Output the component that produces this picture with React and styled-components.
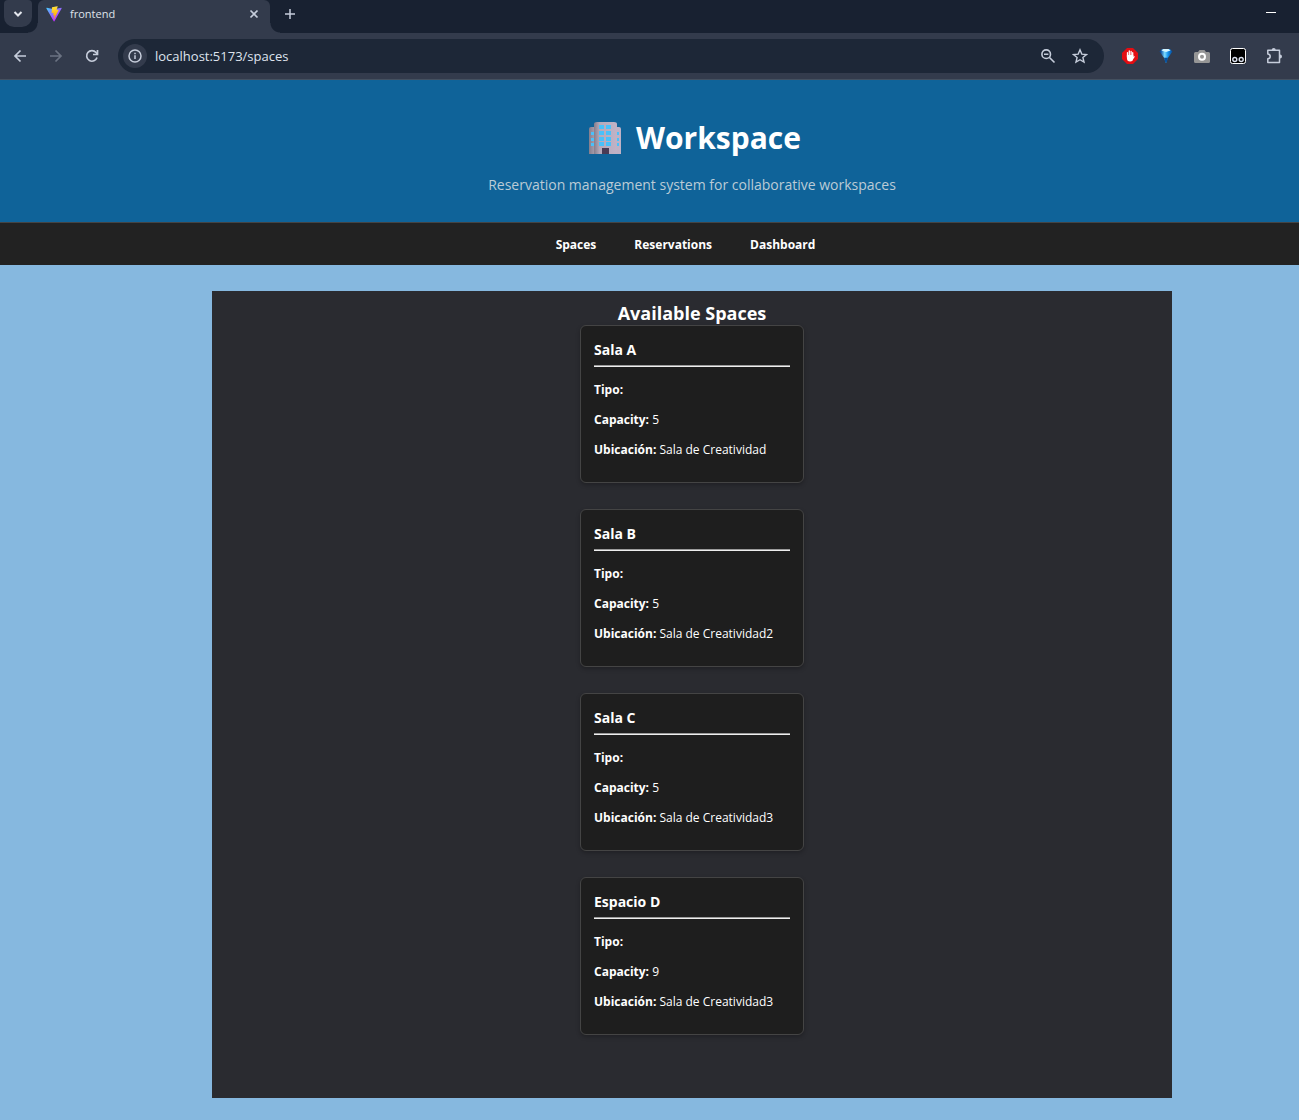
import React from "react";
import styled, { createGlobalStyle } from "styled-components";

const GlobalStyle = createGlobalStyle`
  *, *::before, *::after { box-sizing: border-box; }
  body {
    margin: 0;
    background: #86b8df;
    color: #fff;
    font-family: "Open Sans", "Noto Sans", sans-serif;
    font-size: 13px;
  }
  h1, h2, h3, p { margin: 0; }
`;

const Page = styled.div`
  display: flex;
  flex-direction: column;
  min-height: 100vh;
`;

const TabStrip = styled.div`
  display: flex;
  align-items: flex-start;
  height: 33px;
  background: #182131;
  color: #dfe3ea;
`;

const TabSearch = styled.button`
  display: grid;
  place-items: center;
  width: 28px;
  height: 27px;
  margin: 0 6px 0 4px;
  padding: 0;
  border: 0;
  border-radius: 4px 4px 10px 10px;
  background: #333b4c;
  color: #e4e7ee;
`;

const Tab = styled.div`
  position: relative;
  display: flex;
  align-items: center;
  width: 232px;
  height: 33px;
  padding: 0 8px 6px;
  border-radius: 6px 6px 0 0;
  background: #333b4c;
  font-size: 11px;

  &::before, &::after {
    content: "";
    position: absolute;
    bottom: 0;
    width: 10px;
    height: 10px;
  }
  &::before {
    right: 100%;
    background: radial-gradient(circle at 0 0, transparent 9px, #333b4c 10px);
  }
  &::after {
    left: 100%;
    background: radial-gradient(circle at 100% 0, transparent 9px, #333b4c 10px);
  }
`;

const TabTitle = styled.span`
  flex: 1;
  margin-left: 8px;
`;

const IconButton = styled.button`
  display: grid;
  place-items: center;
  flex: none;
  width: ${(p) => p.$size || 36}px;
  height: ${(p) => p.$size || 36}px;
  padding: 0;
  border: 0;
  border-radius: 50%;
  background: ${(p) => p.$fill || "transparent"};
  color: ${(p) => p.$color || "#c6cddb"};
`;

const NewTab = styled(IconButton)`
  height: 27px;
  margin-left: 2px;
`;

const Minimize = styled(IconButton)`
  height: 26px;
  margin: 0 10px 0 auto;
  color: #fff;
`;

const Toolbar = styled.div`
  display: flex;
  align-items: center;
  height: 47px;
  padding: 0 7px 0 2px;
  border-bottom: 1px solid #44505f;
  background: #333b4c;
`;

const AddressBar = styled.div`
  display: flex;
  align-items: center;
  flex: 1;
  height: 34px;
  margin: 0 8px;
  padding: 0 8px 0 5px;
  border-radius: 17px;
  background: #1d2737;
`;

const Address = styled.input`
  flex: 1;
  min-width: 0;
  margin-left: 8px;
  padding: 0;
  border: 0;
  outline: 0;
  background: transparent;
  color: #dfe4ee;
  font: 13px "Open Sans", sans-serif;
`;

const Header = styled.header`
  display: flex;
  flex-direction: column;
  align-items: center;
  height: 143px;
  padding: 36px 0 0 85px;
  border-bottom: 1px solid #444;
  background: #0f6399;
`;

const Title = styled.h1`
  display: flex;
  align-items: center;
  gap: 14px;
  font-size: 30px;
  line-height: 44px;
  font-weight: 700;
`;

const Subtitle = styled.p`
  margin-top: 15px;
  color: #bbcbd6;
  font-size: 14px;
  line-height: 20px;
`;

const Nav = styled.nav`
  display: flex;
  justify-content: center;
  gap: 38px;
  padding: 13px 13px 11px 85px;
  background: #222;
`;

const NavLink = styled.a`
  color: #fff;
  font-size: 12px;
  font-weight: 700;
  line-height: 18px;
  text-decoration: none;
`;

const Content = styled.div`
  padding: 26px 0 22px 85px;
`;

const Main = styled.main`
  display: flex;
  flex-direction: column;
  align-items: center;
  max-width: 960px;
  margin: 0 auto;
  padding: 10px 13px 63px;
  background: #2a2b30;
`;

const SectionTitle = styled.h2`
  font-size: 18px;
  line-height: 24px;
  font-weight: 700;
`;

const CardList = styled.div`
  display: grid;
  gap: 26px;
`;

const Card = styled.article`
  width: 224px;
  padding: 13px 13px 24px;
  border: 1px solid #444;
  border-radius: 6px;
  background: #1e1e1e;
  box-shadow: 0 2px 4px rgba(0, 0, 0, 0.25);
`;

const CardTitle = styled.h3`
  font-size: 14px;
  line-height: 22px;
  font-weight: 700;
`;

const Rule = styled.hr`
  height: 2px;
  margin: 4px 0 14px;
  border: 0;
  border-top: 1px solid #9a9a9a;
  background: #eee;
`;

const Field = styled.p`
  font-size: 12px;
  line-height: 17px;
  & + & { margin-top: 13px; }
`;

const Stroke = ({ size = 16, width = 2, children }) => (
  <svg width={size} height={size} viewBox={`0 0 ${size} ${size}`} fill="none"
    stroke="currentColor" strokeWidth={width} aria-hidden="true">{children}</svg>
);

const ViteLogo = () => (
  <svg width="16" height="16" viewBox="0 0 410 404" aria-hidden="true">
    <defs>
      <linearGradient id="va" x1="6" y1="33" x2="235" y2="344" gradientUnits="userSpaceOnUse">
        <stop stopColor="#41D1FF" /><stop offset="1" stopColor="#BD34FE" />
      </linearGradient>
      <linearGradient id="vb" x1="194" y1="9" x2="236" y2="293" gradientUnits="userSpaceOnUse">
        <stop stopColor="#FFEA83" /><stop offset=".08" stopColor="#FFDD35" /><stop offset="1" stopColor="#FFA800" />
      </linearGradient>
    </defs>
    <path fill="url(#va)" d="M399.641 59.525 215.643 388.545c-3.799 6.793-13.559 6.833-17.415.073L10.582 59.556C6.38 52.19 12.68 43.266 21.028 44.76l184.195 32.923c1.175.21 2.378.208 3.553-.006l180.343-32.87c8.32-1.517 14.649 7.337 10.522 14.719Z" />
    <path fill="url(#vb)" d="M292.965 1.574 156.801 28.255a5 5 0 0 0-4.03 4.611l-8.376 141.464c-.197 3.332 2.863 5.918 6.115 5.168l37.91-8.749c3.547-.818 6.752 2.306 6.023 5.873l-11.263 55.153c-.758 3.712 2.727 6.886 6.352 5.785l23.415-7.114c3.63-1.102 7.118 2.081 6.35 5.796l-17.899 86.633c-1.12 5.419 6.088 8.374 9.094 3.728l2.008-3.103 110.954-221.428c1.858-3.707-1.346-7.935-5.418-7.15l-39.022 7.532c-3.667.707-6.787-2.708-5.752-6.296l25.469-88.291c1.036-3.594-2.095-7.012-5.766-6.293Z" />
  </svg>
);

const Building = () => (
  <svg width="39" height="34" viewBox="-5 0 39 34" aria-hidden="true">
    <defs>
      <linearGradient id="tower"><stop stopColor="#857e8c" /><stop offset=".25" stopColor="#b5aabb" /><stop offset="1" stopColor="#c0b2c6" /></linearGradient>
    </defs>
    <path d="M1 8q0-2 2-2h28q2 0 2 2v25H1Z" fill="url(#tower)" />
    <path d="M6 3q0-2 3-2h17q3 0 3 2v30H6Z" fill="url(#tower)" />
    <g fill="#49c1fa">
      {[4, 10, 16, 21].map((y) => <path key={y} d={`M11 ${y}h5v4h-5zM18 ${y}h5v4h-5z`} />)}
      {[11, 17, 22].map((y) => <path key={y} d={`M3 ${y}h3v3H3zM29 ${y}h2v3h-2z`} />)}
    </g>
    <path d="M14 27h7v6h-7z" fill="#493b55" />
  </svg>
);

const StopHand = () => (
  <svg width="16" height="16" viewBox="0 0 16 16" aria-hidden="true">
    <path d="M5 0h6l5 5v6l-5 5H5l-5-5V5Z" fill="#e40d12" />
    <path d="M5.500 9V4.700M7.300 8V3M9.100 8V3.300M10.700 9V4.700" stroke="#fff" strokeWidth="1.300" strokeLinecap="round" />
    <path d="M4.900 7h6.400v3q0 3.500-3.200 3.500Q4.900 13.500 4.900 10ZM10.800 9.500l1.400-1.500.6.800-2 3Z" fill="#fff" />
  </svg>
);

const Gem = () => (
  <svg width="16" height="16" viewBox="0 0 16 16" aria-hidden="true">
    <defs><linearGradient id="gem"><stop offset=".1" stopColor="#0a4ba0" /><stop offset=".4" stopColor="#7fdcff" /><stop offset=".65" stopColor="#1593ee" /><stop offset="1" stopColor="#064591" /></linearGradient></defs>
    <path d="M1.500 3.500 4 1h8l2.500 2.500-5 7-1 4h-1l-1-4Z" fill="url(#gem)" />
    <path d="m3.500 2.500 2-1.500h5l2 1.500L8 4Z" fill="#d6f5ff" />
    <path d="M6 9.800h4l-1.300 4.700H7.300Z" fill="#07529f" />
  </svg>
);

const Camera = () => (
  <svg width="16" height="16" viewBox="0 0 16 16" aria-hidden="true">
    <path d="M1.500 4H4l1.500-2h5L12 4h2.500Q16 4 16 5.500v8q0 1.500-1.500 1.500h-13Q0 15 0 13.500v-8Q0 4 1.500 4Z" fill="#969696" />
    <circle cx="8" cy="8.800" r="3" fill="#969696" stroke="#fff" strokeWidth="2" />
  </svg>
);

const Monkey = () => (
  <svg width="16" height="16" viewBox="0 0 16 16" aria-hidden="true">
    <rect x=".5" y=".5" width="15" height="15" rx="2" fill="#000" stroke="#fff" />
    <g fill="#000" stroke="#dce2f0" strokeWidth="1.400"><circle cx="4.800" cy="11.500" r="2" /><circle cx="11.200" cy="11.500" r="2" /></g>
  </svg>
);

const spaces = [
  { name: "Sala A", capacity: 5, location: "Sala de Creatividad" },
  { name: "Sala B", capacity: 5, location: "Sala de Creatividad2" },
  { name: "Sala C", capacity: 5, location: "Sala de Creatividad3" },
  { name: "Espacio D", capacity: 9, location: "Sala de Creatividad3" },
];

const extensions = [
  { name: "Content blocker", Icon: StopHand },
  { name: "Gem", Icon: Gem },
  { name: "Screenshot", Icon: Camera },
  { name: "User scripts", Icon: Monkey },
];

const Browser = () => (
  <>
    <TabStrip>
      <TabSearch aria-label="Search tabs"><Stroke><path d="m4.500 6 3.500 3.500L11.500 6" /></Stroke></TabSearch>
      <Tab>
        <ViteLogo />
        <TabTitle>frontend</TabTitle>
        <IconButton $size={16} aria-label="Close tab"><Stroke width={1.7}><path d="m4.500 4.500 7 7m0-7-7 7" /></Stroke></IconButton>
      </Tab>
      <NewTab aria-label="New tab"><Stroke width={1.5}><path d="M8 3v10M3 8h10" /></Stroke></NewTab>
      <Minimize aria-label="Minimize"><Stroke width={1}><path d="M3 7.500h10" /></Stroke></Minimize>
    </TabStrip>
    <Toolbar>
      <IconButton aria-label="Back"><Stroke width={1.7}><path d="M14 8H3m5.500-5.500L3 8l5.500 5.500" /></Stroke></IconButton>
      <IconButton $color="#6b7382" aria-label="Forward"><Stroke width={1.7}><path d="M2 8h11M7.500 2.500 13 8l-5.500 5.500" /></Stroke></IconButton>
      <IconButton aria-label="Reload"><Stroke width={1.7}><path d="M13 9.500A5.300 5.300 0 1 1 12 4.500L13.500 6M13.500 2v4.500H9" /></Stroke></IconButton>
      <AddressBar>
        <IconButton $size={24} $fill="#333b4c" aria-label="Site information">
          <Stroke width={1.5}><circle cx="8" cy="8" r="6" /><path d="M8 7.300V11M8 4.700v1.500" /></Stroke>
        </IconButton>
        <Address aria-label="Address" defaultValue="localhost:5173/spaces" />
        <IconButton $size={32} aria-label="Zoom"><Stroke width={1.6}><circle cx="6.200" cy="6.200" r="4.300" /><path d="m9.500 9.500 5 5M4 6.200h4.400" /></Stroke></IconButton>
        <IconButton $size={32} aria-label="Bookmark"><Stroke width={1.4}><path d="m8 1.800 1.800 4.300 4.700.4-3.600 3 1.100 4.600L8 11.700l-4 2.400 1.100-4.600-3.600-3 4.700-.4Z" /></Stroke></IconButton>
      </AddressBar>
      {extensions.map(({ name, Icon }) => <IconButton key={name} aria-label={name}><Icon /></IconButton>)}
      <IconButton aria-label="Extensions"><Stroke width={1.5}><path d="M1.800 2.200h11.700v12.300H1.800v-3.800q2.400-.2 2.400-2.300t-2.400-2.300Z" strokeLinejoin="round" /><path d="M5.700 2a2 2 0 0 1 4 0ZM14 6.400a2 2 0 0 1 0 4Z" fill="currentColor" stroke="none" /></Stroke></IconButton>
    </Toolbar>
  </>
);

export default function App() {
  return (
    <Page>
      <GlobalStyle />
      <Browser />
      <Header>
        <Title><Building />Workspace</Title>
        <Subtitle>Reservation management system for collaborative workspaces</Subtitle>
      </Header>
      <Nav>
        {["Spaces", "Reservations", "Dashboard"].map((label) => (
          <NavLink key={label} href={`#${label.toLowerCase()}`}>{label}</NavLink>
        ))}
      </Nav>
      <Content>
        <Main>
          <SectionTitle>Available Spaces</SectionTitle>
          <CardList>
            {spaces.map((space) => (
              <Card key={space.name}>
                <CardTitle>{space.name}</CardTitle>
                <Rule />
                <Field><strong>Tipo:</strong></Field>
                <Field><strong>Capacity:</strong> {space.capacity}</Field>
                <Field><strong>Ubicación:</strong> {space.location}</Field>
              </Card>
            ))}
          </CardList>
        </Main>
      </Content>
    </Page>
  );
}
